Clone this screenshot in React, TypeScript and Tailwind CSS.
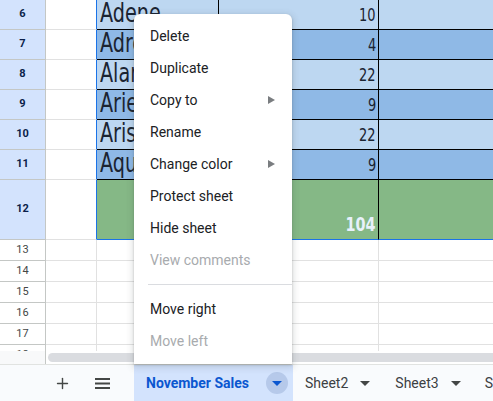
import { Plus } from "lucide-react";

type Row = {
  n: number;
  h: string;
  name?: string;
  value?: string;
  fill?: string;
  total?: boolean;
};

const rows: Row[] = [
  { n: 6, h: "h-[30px]", name: "Adene", value: "10", fill: "bg-[#bdd7f1]" },
  { n: 7, h: "h-[30px]", name: "Adrel", value: "4", fill: "bg-[#8fb9e6]" },
  { n: 8, h: "h-[30px]", name: "Alamo", value: "22", fill: "bg-[#bdd7f1]" },
  { n: 9, h: "h-[30px]", name: "Ariel", value: "9", fill: "bg-[#8fb9e6]" },
  { n: 10, h: "h-[30px]", name: "Aris", value: "22", fill: "bg-[#bdd7f1]" },
  { n: 11, h: "h-[30px]", name: "Aqua", value: "9", fill: "bg-[#8fb9e6]" },
  { n: 12, h: "h-[60px]", value: "104", fill: "bg-[#85b886]", total: true },
  { n: 13, h: "h-[21px]" },
  { n: 14, h: "h-[21px]" },
  { n: 15, h: "h-[21px]" },
  { n: 16, h: "h-[21px]" },
  { n: 17, h: "h-[21px]" },
  { n: 18, h: "h-[21px]" },
];

const menu: { label: string; sub?: boolean; off?: boolean; sep?: boolean }[] = [
  { label: "Delete" },
  { label: "Duplicate" },
  { label: "Copy to", sub: true },
  { label: "Rename" },
  { label: "Change color", sub: true },
  { label: "Protect sheet" },
  { label: "Hide sheet" },
  { label: "View comments", off: true },
  { label: "", sep: true },
  { label: "Move right" },
  { label: "Move left", off: true },
];

const Caret = ({ color = "#444746" }: { color?: string }) => (
  <svg width="10" height="5" viewBox="0 0 10 5" className="shrink-0">
    <path d="M0 0 L10 0 L5 5 Z" fill={color} />
  </svg>
);

const GridRow = ({ r }: { r: Row }) => {
  const sel = !!r.fill;
  return (
    <div className={`flex shrink-0 ${r.h}`}>
      <div
        className={`w-[46px] shrink-0 flex justify-center items-center border-r border-b border-[#c4c7c5] text-[11px] ${
          sel ? "bg-[#d3e3fd] font-bold text-[#0b1f4a]" : "bg-white text-[#444746]"
        }`}
      >
        {r.n}
      </div>
      <div
        className={`w-[51px] shrink-0 bg-white border-b border-[#e1e1e1] border-r ${
          sel ? "border-r-[#1a73e8]" : "border-r-[#e1e1e1]"
        }`}
      />
      {sel ? (
        <>
          <div
            className={`w-[122px] shrink-0 ${r.fill} border-r border-b border-black ${
              r.total ? "border-b-[#1a73e8]" : ""
            } flex items-end pl-[3px] pb-[3px] overflow-hidden`}
          >
            <span className="font-['DejaVu_Sans_Condensed','DejaVu_Sans',sans-serif] text-[26px] leading-none text-[#1b2432] origin-bottom-left scale-x-[0.82] whitespace-nowrap">
              {r.name}
            </span>
          </div>
          <div
            className={`w-[160px] shrink-0 ${r.fill} border-r border-b border-black ${
              r.total ? "border-b-[#1a73e8]" : ""
            } flex items-end justify-end pr-[2px] pb-[5px]`}
          >
            <span
              className={`font-['DejaVu_Sans_Condensed','DejaVu_Sans',sans-serif] leading-none origin-bottom-right scale-x-[0.8] ${
                r.total
                  ? "text-[20px] font-bold text-[#e8f1fb]"
                  : "text-[18px] text-[#1b2432]"
              }`}
            >
              {r.value}
            </span>
          </div>
          <div
            className={`flex-1 ${r.fill} border-b border-black ${
              r.total ? "border-b-[#1a73e8]" : ""
            }`}
          />
        </>
      ) : (
        <>
          <div className="w-[122px] shrink-0 bg-white border-r border-b border-[#e1e1e1]" />
          <div className="w-[160px] shrink-0 bg-white border-r border-b border-[#e1e1e1]" />
          <div className="flex-1 bg-white border-b border-[#e1e1e1]" />
        </>
      )}
    </div>
  );
};

export default function App() {
  return (
    <div className="relative w-[493px] h-[401px] overflow-hidden bg-white font-['Roboto','Liberation_Sans',sans-serif]">
      <div className="flex flex-col h-full">
        <div className="h-[351px] shrink-0 overflow-hidden flex flex-col">
          {rows.map((r) => (
            <GridRow key={r.n} r={r} />
          ))}
        </div>

        <div className="h-[13px] flex shrink-0 bg-white">
          <div className="w-[46px] shrink-0 border-r border-[#c4c7c5] bg-[#f8f9fa]" />
          <div className="flex-1 pl-[2px] pt-[2px] pb-[2px]">
            <div className="h-full rounded-l-full bg-[#dadce0]" />
          </div>
        </div>

        <div className="flex-1 flex items-stretch bg-[#f9fbfd] border-t border-[#e1e3e1] text-[14px] whitespace-nowrap">
          <div className="w-[46px] shrink-0" />
          <div className="w-[32px] shrink-0 flex items-center justify-center text-[#444746]">
            <Plus size={17} strokeWidth={2} />
          </div>
          <div className="w-[48px] shrink-0 flex items-center justify-center">
            <svg width="15" height="11" viewBox="0 0 15 11">
              <rect x="0" y="0" width="15" height="2" fill="#444746" />
              <rect x="0" y="4.5" width="15" height="2" fill="#444746" />
              <rect x="0" y="9" width="15" height="2" fill="#444746" />
            </svg>
          </div>
          <div className="w-[8px] shrink-0" />
          <div className="w-[159px] shrink-0 flex items-center pl-[12px] bg-[#d3e3fd]">
            <span className="font-bold text-[#0b57d0]">November Sales</span>
            <span className="ml-auto mr-[5px] w-[22px] h-[22px] shrink-0 rounded-full bg-[#b6c9ea] flex items-center justify-center">
              <Caret color="#0b57d0" />
            </span>
          </div>
          <div className="shrink-0 flex items-center pl-[12px] pr-[13px] gap-[12px] text-[#3c4043]">
            <span>Sheet2</span>
            <Caret />
          </div>
          <div className="shrink-0 flex items-center pl-[12px] pr-[13px] gap-[12px] text-[#3c4043]">
            <span>Sheet3</span>
            <Caret />
          </div>
          <div className="shrink-0 flex items-center pl-[11px] text-[#3c4043]">
            <span>Sheet4</span>
          </div>
        </div>
      </div>

      <div className="absolute left-[134px] top-[14px] w-[158px] h-[350px] bg-white rounded-t-[6px] shadow-[0_2px_6px_2px_rgba(60,64,67,0.15),0_1px_2px_rgba(60,64,67,0.3)] pt-[6px] text-[14px]">
        {menu.map((m, i) =>
          m.sep ? (
            <div key={i} className="py-[8px] pl-[14px]">
              <div className="h-px bg-[#dadce0]" />
            </div>
          ) : (
            <div
              key={i}
              className={`h-[32px] flex items-center pl-[16px] pr-[17px] ${
                m.off ? "text-[#a8abae]" : "text-[#202124]"
              }`}
            >
              <span>{m.label}</span>
              {m.sub && (
                <svg className="ml-auto" width="7" height="8" viewBox="0 0 7 8">
                  <path d="M0 0 L7 4 L0 8 Z" fill="#7a7d80" />
                </svg>
              )}
            </div>
          )
        )}
      </div>
    </div>
  );
}
